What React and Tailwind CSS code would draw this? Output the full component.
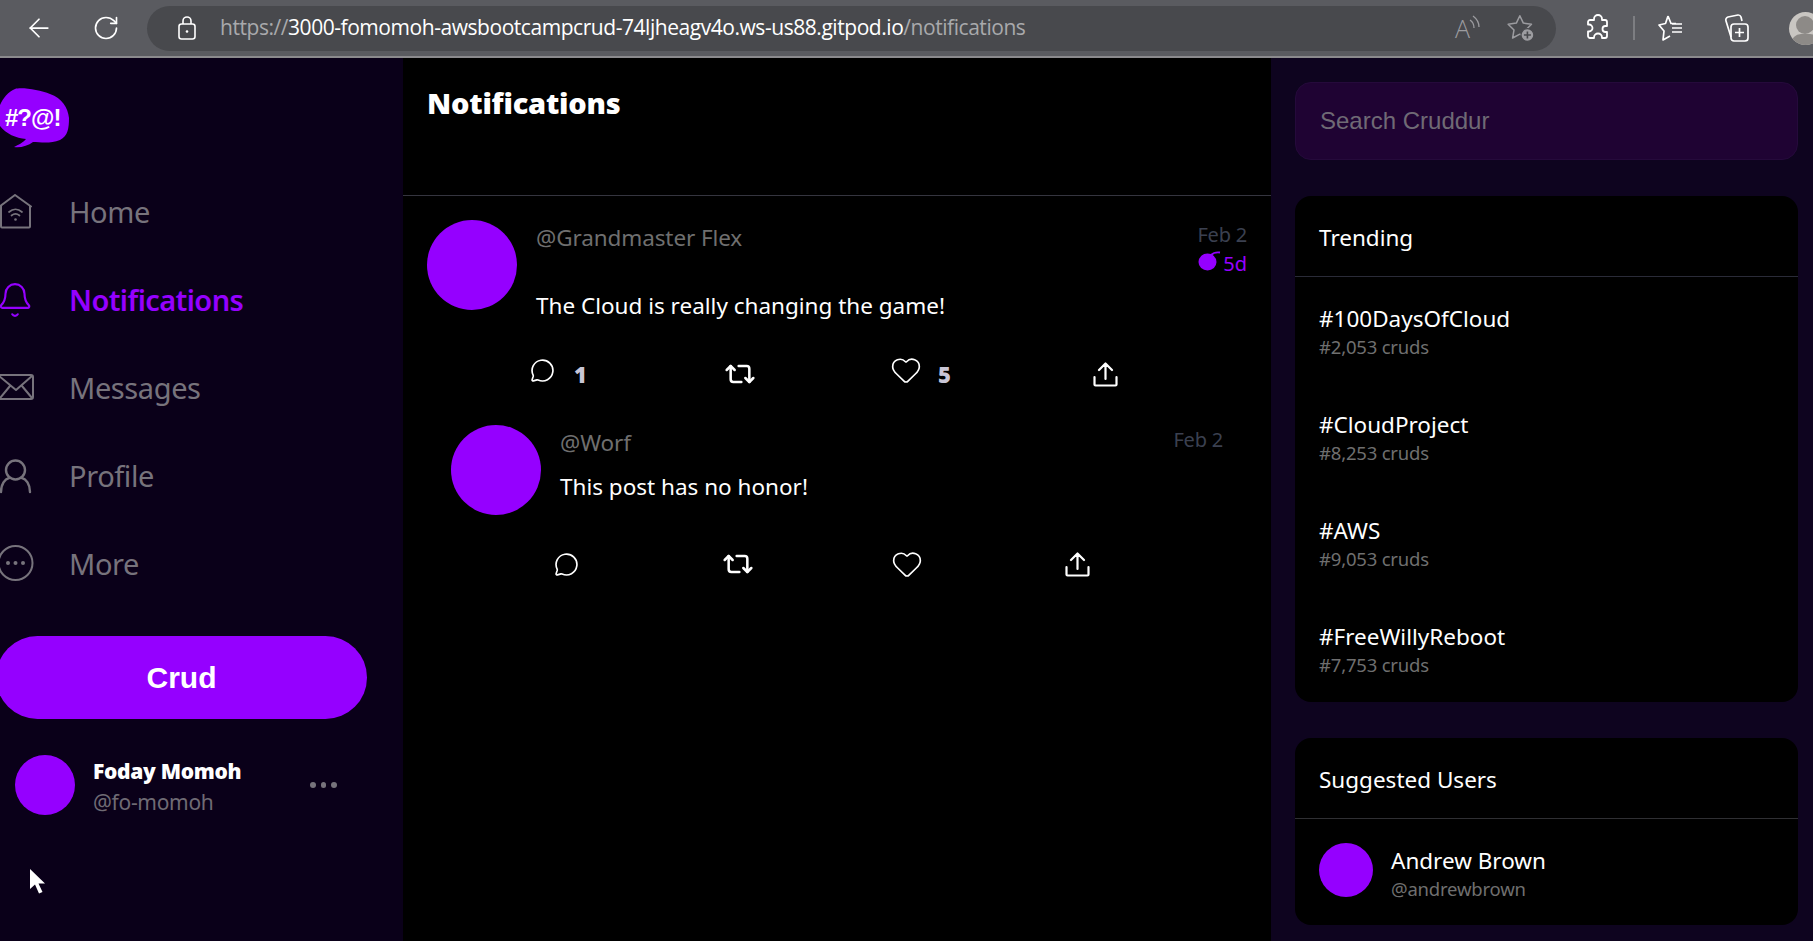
import React from 'react';
import { ArrowLeft, RotateCw, Bell, MessageCircle, Repeat2, Heart } from 'lucide-react';

const font = "font-['Noto_Sans','Open_Sans',sans-serif]";

const Logo = () => (
  <div className="relative w-[70px] h-[60px]">
    <svg width="70" height="60" viewBox="0 0 70 60" className="absolute inset-0">
      <path d="M15 1C22-1 40 2 50 6C62 10 68 20 69 30C69 40 68 48 60 52C50 56 40 54 33 54C28 58 20 60 14 59C18 57 24 54 26 51C16 50 6 46 0 38L0 17C3 10 8 4 15 1Z" fill="#9500ff" />
    </svg>
    <span className="absolute left-[5px] top-[15px] whitespace-nowrap text-white text-[24px] leading-[30px] font-bold tracking-[-1px] font-['Liberation_Sans',sans-serif]">#?@!</span>
  </div>
);

const HomeIcon = () => (
  <svg width="33" height="35" viewBox="0 0 33 35" fill="none" stroke="#77737c" strokeWidth="2" strokeLinejoin="round" strokeLinecap="round" className="-mt-[2px]">
    <path d="M-1 13 15 1l16 11.5M1 12v20.5a1 1 0 0 0 1 1h27a1 1 0 0 0 1-1V12" />
    <path d="M9 18c4-3.500 9-3.500 13 0M11.500 21.500c2.500-2 5.500-2 8 0" strokeWidth="1.700" />
    <circle cx="15.500" cy="25.500" r="1.300" fill="#77737c" stroke="none" />
  </svg>
);

const MailIcon = () => (
  <svg width="34" height="26" viewBox="0 0 34 26" fill="none" stroke="#77737c" strokeWidth="2" strokeLinejoin="round" className="-mt-[2px]">
    <path d="M-2 1h33a2 2 0 0 1 2 2v20a2 2 0 0 1-2 2H-2" />
    <path d="M-1 2 16 16 32 2M0 24l10-12M32 24 22 12" />
  </svg>
);

const UserIcon = () => (
  <svg width="32" height="35" viewBox="0 0 32 35" fill="none" stroke="#77737c" strokeWidth="2.400" strokeLinecap="round">
    <circle cx="15.500" cy="11" r="9.500" />
    <path d="M1 33c0-8 4-13 8-14M30 33c0-8-4-13-8-14" />
  </svg>
);

const MoreIcon = () => (
  <svg width="34" height="36" viewBox="0 0 34 36" fill="none" stroke="#77737c" strokeWidth="2" className="-mt-[2px]">
    <circle cx="15.500" cy="18" r="17" />
    <circle cx="8" cy="18" r="2" fill="#77737c" stroke="none" />
    <circle cx="15.500" cy="18" r="2" fill="#77737c" stroke="none" />
    <circle cx="23" cy="18" r="2" fill="#77737c" stroke="none" />
  </svg>
);

const ShareIcon = () => (
  <svg width="25" height="25" viewBox="0 0 25 25" fill="none" stroke="white" strokeWidth="2.200" strokeLinecap="round" strokeLinejoin="round" className="shrink-0">
    <path d="M12.500 17V2M6 8l6.500-6.500L19 8M1.500 15v7.500a1 1 0 0 0 1 1h20a1 1 0 0 0 1-1V15" />
  </svg>
);

// edge's extensions icon, one knob on top and one on the side
const ExtensionsIcon = () => (
  <svg width="22" height="30" viewBox="0 0 22 30" fill="none" stroke="white" strokeWidth="1.800" strokeLinejoin="round" className="ml-[31px] shrink-0">
    <path d="M7 6a4 4 0 0 1 8 0v1h3a2 2 0 0 1 2 2v4h-1.500a3 3 0 0 0 0 6H20v4a2 2 0 0 1-2 2h-3v-.5a4 4 0 0 0-8 0v.5H3a2 2 0 0 1-2-2v-4.500h1a3.500 3.500 0 0 0 0-7H1V9a2 2 0 0 1 2-2h4Z" />
  </svg>
);

const Bomb = () => (
  <svg width="23" height="20" viewBox="0 0 23 20" fill="#9500ff">
    <ellipse cx="9.500" cy="11" rx="9" ry="8.500" />
    <path d="M13 4c2-2 5-3 9-2.500" fill="none" stroke="#9500ff" strokeWidth="1.800" />
  </svg>
);

const navItems = [
  { label: 'Home', icon: <HomeIcon /> },
  { label: 'Notifications', icon: <Bell size={38} strokeWidth={1.35} color="#9500ff" className="-ml-[4px]" />, active: true },
  { label: 'Messages', icon: <MailIcon /> },
  { label: 'Profile', icon: <UserIcon /> },
  { label: 'More', icon: <MoreIcon /> },
];

const trending = [
  { tag: '#100DaysOfCloud', count: '#2,053 cruds' },
  { tag: '#CloudProject', count: '#8,253 cruds' },
  { tag: '#AWS', count: '#9,053 cruds' },
  { tag: '#FreeWillyReboot', count: '#7,753 cruds' },
];

const BrowserBar = () => (
  <div className="h-[58px] shrink-0 bg-[#5a5b60] border-b-2 border-[#8b8a8d] flex items-center text-white">
    <ArrowLeft size={30} strokeWidth={1.4} className="ml-[24px] shrink-0" />
    <RotateCw size={28} strokeWidth={1.4} className="ml-[38px] shrink-0" />
    <div className="ml-[27px] w-[1409px] h-[45px] shrink-0 rounded-full bg-[#48494d] flex items-center pl-[30px] pr-[21px]">
      <svg width="20" height="24" viewBox="0 0 20 24" fill="none" stroke="white" strokeWidth="1.600" className="shrink-0">
        <rect x="2" y="8" width="16" height="15" rx="2.500" />
        <path d="M6 8V5a4 4 0 0 1 8 0v3" />
        <circle cx="10" cy="15.500" r="1.300" fill="white" stroke="none" />
      </svg>
      <p className="ml-[23px] flex-1 text-[21px] whitespace-nowrap text-[#a9a9ac] font-['Open_Sans',sans-serif] tracking-[-0.45px]">
        https://<span className="text-white">3000-fomomoh-awsbootcampcrud-74ljheagv4o.ws-us88.gitpod.io</span>/notifications
      </p>
      <div className="relative w-[26px] h-[28px]">
        <span className="absolute left-0 top-0 text-[25px] leading-[28px] font-light text-[#9c9ca0] font-['Open_Sans',sans-serif]">A</span>
        <svg width="26" height="28" viewBox="0 0 26 28" fill="none" stroke="#9c9ca0" strokeWidth="1.300" className="absolute inset-0">
          <path d="M15 6c3 2 4 5 4 8M18 2c4 3 6 7 6 11" />
        </svg>
      </div>
      <svg width="28" height="28" viewBox="0 0 24 24" fill="none" stroke="#9c9ca0" strokeWidth="1.300" strokeLinejoin="round" className="ml-[26px]">
        <path d="M11 1.500 14 7.800l7 1-5 4.900 1.200 6.900-6.200-3.300-6.200 3.300L6 13.700 1 8.800l7-1Z" />
        <circle cx="17.500" cy="18" r="5.500" fill="#9c9ca0" stroke="#48494d" strokeWidth="1" />
        <path d="M17.500 15v6M14.500 18h6" stroke="#48494d" strokeWidth="1.400" />
      </svg>
    </div>
    <ExtensionsIcon />
    <div className="w-[2px] h-[24px] bg-[#7d7e82] ml-[24px] shrink-0" />
    <svg width="26" height="28" viewBox="0 0 26 28" fill="none" stroke="white" strokeWidth="1.700" strokeLinejoin="round" className="ml-[23px] shrink-0">
      <path d="M10 2 7.500 9.500 1 11l5 6-1 9 7-4M10 2l3 7.500h5M14 14h10M14 18h10M14 10h10" />
    </svg>
    <svg width="26" height="30" viewBox="0 0 26 30" fill="none" stroke="white" strokeWidth="1.700" strokeLinejoin="round" className="ml-[40px] shrink-0">
      <path d="M7 24 2 8a3 3 0 0 1 2-4l10-2a3 3 0 0 1 3 2l1 4" />
      <rect x="7" y="11" width="17" height="17" rx="3" />
      <path d="M15.500 15v9M11 19.500h9" />
    </svg>
    <div className="ml-[39px] w-[33px] h-[33px] rounded-full bg-[#c9c6c2] shrink-0 relative overflow-hidden">
      <div className="absolute left-[7px] top-[4px] w-[18px] h-[18px] rounded-full bg-[#8d8a87]" />
      <div className="absolute left-[2px] top-[22px] w-[29px] h-[20px] rounded-full bg-[#8d8a87]" />
    </div>
  </div>
);

const Sidebar = () => (
  <aside className="w-[403px] shrink-0 bg-[#0a0019] overflow-hidden">
    <div className="h-[110px] pt-[30px]">
      <Logo />
    </div>
    <nav>
      {navItems.map((item) => (
        <div key={item.label} className="h-[88px] flex items-center">
          <div className="w-[69px] flex items-center">{item.icon}</div>
          <span className={`text-[29px] tracking-[-0.4px] ${item.active ? 'text-[#9500ff] font-semibold tracking-[-0.6px]' : 'text-[#77737c]'}`}>{item.label}</span>
        </div>
      ))}
    </nav>
    <button className="mt-[28px] -ml-[4px] w-[371px] h-[83px] rounded-full bg-[#9500ff] text-white text-[30px] font-bold font-['Liberation_Sans',sans-serif]">
      Crud
    </button>
    <div className="mt-[33px] ml-[15px] flex items-center">
      <div className="w-[60px] h-[60px] rounded-full bg-[#9500ff]" />
      <div className="ml-[18px] w-[217px] pt-[4px]">
        <p className="text-white text-[21px] leading-[30px] font-black tracking-[-0.3px]">Foday Momoh</p>
        <p className="text-[#6f6b74] text-[21px] leading-[32px] tracking-[-0.3px]">@fo-momoh</p>
      </div>
      <div className="flex gap-[5px]">
        <span className="w-[5.500px] h-[5.500px] rounded-full bg-[#77737c]" />
        <span className="w-[5.500px] h-[5.500px] rounded-full bg-[#77737c]" />
        <span className="w-[5.500px] h-[5.500px] rounded-full bg-[#77737c]" />
      </div>
    </div>
  </aside>
);

const ActionCount = ({ value }) => (
  <span className="text-[#c9c6d6] text-[22px] font-black leading-none w-[14px]">{value}</span>
);

const Post = ({ handle, body, likes, reposts, bomb, bodyClass, actionsClass, raiseClass, retweetClass, heartClass, shareClass }) => (
  <div className="flex gap-[19px]">
    <div className="w-[90px] h-[90px] rounded-full bg-[#9500ff] shrink-0" />
    <div className="flex-1">
      <div className="flex justify-between h-[36px]">
        <span className="text-[#6f6f6f] text-[22.500px] leading-[36px] tracking-[-0.1px]">{handle}</span>
        <div className="text-right">
          <p className="text-[#3b4050] text-[20px] leading-[30px] tracking-[-0.2px]">Feb 2</p>
          {bomb && (
            <p className="flex items-center justify-end gap-[2px] text-[#9500ff] text-[20px] leading-[26px] mt-[1px]">
              <span className="-mt-[6px]"><Bomb /></span>5d
            </p>
          )}
        </div>
      </div>
      <p className={`text-white text-[22.500px] leading-[36px] ${bodyClass}`}>{body}</p>
      <div className={`flex items-center h-[36px] -ml-[6px] ${actionsClass}`}>
        <div className="flex items-center gap-[19px]">
          <MessageCircle size={25} strokeWidth={1.6} className={`text-white ${raiseClass}`} />
          {reposts && <ActionCount value={reposts} />}
        </div>
        <Repeat2 size={32} strokeWidth={1.9} className={`text-white shrink-0 ${retweetClass}`} />
        <div className={`flex items-center gap-[16px] ${heartClass}`}>
          <Heart size={32} strokeWidth={1.25} className={`text-white ${raiseClass}`} />
          {likes && <ActionCount value={likes} />}
        </div>
        <div className={shareClass}>
          <ShareIcon />
        </div>
      </div>
    </div>
  </div>
);

const Main = () => (
  <main className="w-[868px] shrink-0 bg-black">
    <div className="h-[138px] border-b border-[#35353f] pl-[24px] pt-[24px]">
      <h1 className="text-white text-[29px] leading-[42px] font-black tracking-[-0.2px]">Notifications</h1>
    </div>
    <div className="pt-[24px] px-[24px]">
      <Post
        handle="@Grandmaster Flex"
        body="The Cloud is really changing the game!"
        reposts="1"
        likes="5"
        bomb
        bodyClass="mt-[32px]"
        actionsClass="mt-[32px]"
        raiseClass="-translate-y-[4px]"
        retweetClass="ml-[136px]"
        heartClass="ml-[134px]"
        shareClass="ml-[141px]"
      />
      <div className="mt-[33px] mx-[24px]">
        <Post
          handle="@Worf"
          body="This post has no honor!"
          bodyClass="mt-[8px]"
          actionsClass="mt-[41px]"
          raiseClass=""
          retweetClass="ml-[143px]"
          heartClass="ml-[137px]"
          shareClass="ml-[142px]"
        />
      </div>
    </div>
  </main>
);

const RightRail = () => (
  <aside className="flex-1 bg-[#0e041f] pl-[24px] pr-[15px] pt-[24px] overflow-hidden">
    <div className="h-[78px] rounded-2xl bg-[#1f0333] border border-[#250a3b] flex items-center pl-[24px] text-[#6f6a75] text-[24px] font-['Liberation_Sans',sans-serif]">
      Search Cruddur
    </div>
    <section className="mt-[36px] rounded-2xl bg-black pb-[1px]">
      <h2 className="h-[81px] border-b border-[#2a2b38] pl-[24px] pt-[24px] text-white text-[22.500px] leading-[36px]">Trending</h2>
      {trending.map((t) => (
        <div key={t.tag} className="h-[106px] pl-[24px] pt-[24px]">
          <p className="text-white text-[22.500px] leading-[36px]">{t.tag}</p>
          <p className="text-[#6f6f6f] text-[18.500px] leading-[20px] tracking-[-0.2px]">{t.count}</p>
        </div>
      ))}
    </section>
    <section className="mt-[36px] rounded-2xl bg-black">
      <h2 className="h-[81px] border-b border-[#2f2f33] pl-[24px] pt-[24px] text-white text-[22.500px] leading-[36px]">Suggested Users</h2>
      <div className="h-[106px] pl-[24px] pt-[24px] flex gap-[18px]">
        <div className="w-[54px] h-[54px] rounded-full bg-[#9500ff]" />
        <div className="mt-[2px]">
          <p className="text-white text-[22.500px] leading-[32px]">Andrew Brown</p>
          <p className="text-[#6f6f6f] text-[18.500px] leading-[24px] tracking-[-0.2px]">@andrewbrown</p>
        </div>
      </div>
    </section>
  </aside>
);

export default function App() {
  return (
    <div className={`relative h-screen flex flex-col overflow-hidden ${font}`}>
      <BrowserBar />
      <div className="flex flex-1 min-h-0">
        <Sidebar />
        <Main />
        <RightRail />
      </div>
      <svg width="18" height="27" viewBox="0 0 18 27" className="absolute left-[29px] top-[868px]">
        <path d="M1 1v20l5-4.500 4 9 3.500-1.500-4-8.500H16Z" fill="white" />
      </svg>
    </div>
  );
}
